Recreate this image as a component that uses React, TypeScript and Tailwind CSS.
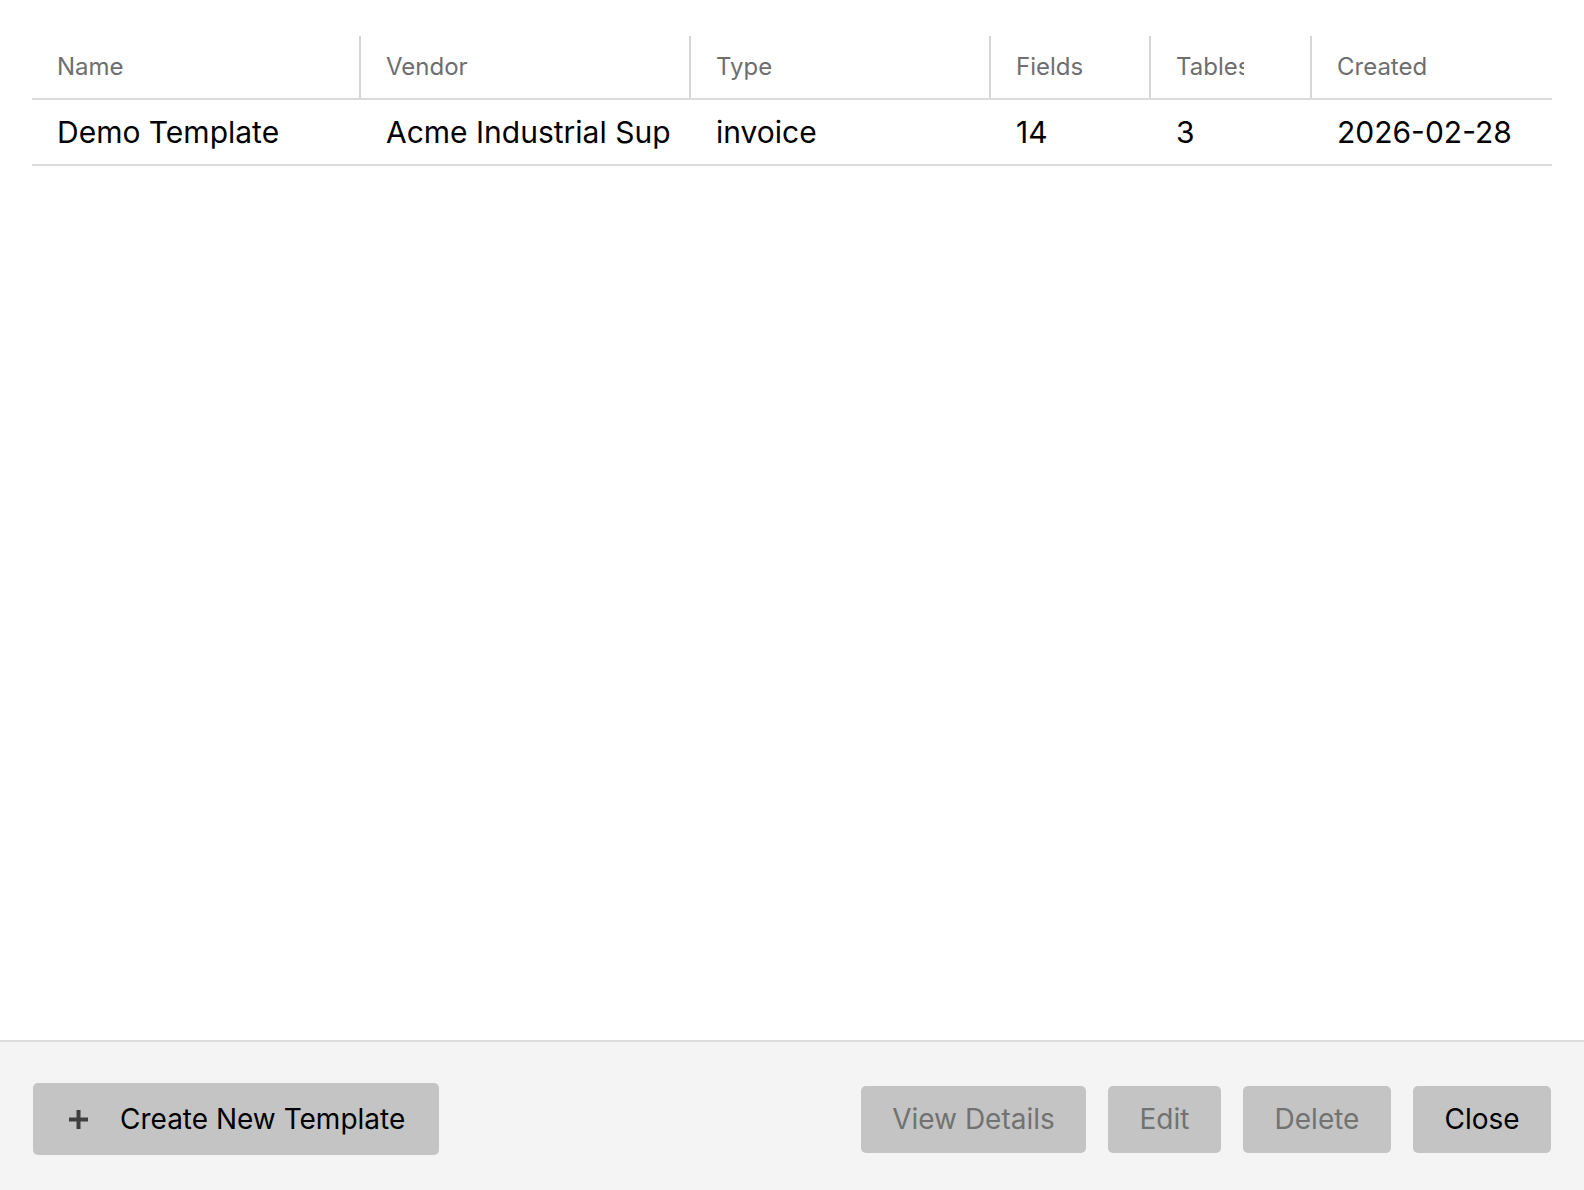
const columns = [
  { label: 'Name', width: 'w-[329px]' },
  { label: 'Vendor', width: 'w-[330px]' },
  { label: 'Type', width: 'w-[300px]' },
  { label: 'Fields', width: 'w-[160px]' },
  { label: 'Tables', width: 'w-[161px]' },
  { label: 'Created', width: 'flex-1' },
]

// vendor is cut short by the cell, as in the app
const row = ['Demo Template', 'Acme Industrial Sup', 'invoice', '14', '3', '2026-02-28']

function PlusIcon() {
  return (
    <svg width="21" height="21" viewBox="0 0 21 21" className="shrink-0">
      <path d="M10.5 1v19M1 10.5h19" stroke="#404040" strokeWidth="4" fill="none" />
    </svg>
  )
}

export default function App() {
  return (
    <div className="flex flex-col h-[1190px] bg-white text-black" style={{ fontFamily: 'Inter, "Noto Sans", sans-serif' }}>
      <div className="flex-1 pt-[36px] pl-[32px] pr-[32px]">
        <div className="flex h-[64px] border-b-2 border-[#dadada]">
          {columns.map((c, i) => (
            <div key={c.label}
              className={`${c.width} flex items-center pl-[25px] pr-[66px] text-[24px] text-[#6e6e6e] overflow-hidden whitespace-nowrap ${i < columns.length - 1 ? 'border-r-2 border-[#d6d6d6]' : ''}`}>
              <span className="overflow-hidden">{c.label}</span>
            </div>
          ))}
        </div>
        <div className="flex h-[66px] border-b-2 border-[#dadada]">
          {columns.map((c, i) => (
            <div key={c.label}
              className={`${c.width} flex items-center pl-[25px] pr-[18px] text-[30px] overflow-hidden whitespace-nowrap`}>
              <span className="overflow-hidden">{row[i]}</span>
            </div>
          ))}
        </div>
      </div>

      <div className="h-[150px] bg-[#f4f4f4] border-t-2 border-[#dcdcdc] flex items-center justify-between pl-[33px] pr-[33px] pt-[6px]">
        <button className="w-[406px] h-[72px] flex items-center pl-[35px] gap-[31px] rounded-[5px] bg-[#c4c4c4] text-[28px] text-black">
          <PlusIcon />
          Create New Template
        </button>
        <div className="flex gap-[22px]">
          <button className="w-[225px] h-[67px] rounded-[5px] bg-[#c4c4c4] text-[28px] text-[#727272]">View Details</button>
          <button className="w-[113px] h-[67px] rounded-[5px] bg-[#c4c4c4] text-[28px] text-[#727272]">Edit</button>
          <button className="w-[148px] h-[67px] rounded-[5px] bg-[#c4c4c4] text-[28px] text-[#727272]">Delete</button>
          <button className="w-[138px] h-[67px] rounded-[5px] bg-[#c4c4c4] text-[28px] text-black">Close</button>
        </div>
      </div>
    </div>
  )
}
